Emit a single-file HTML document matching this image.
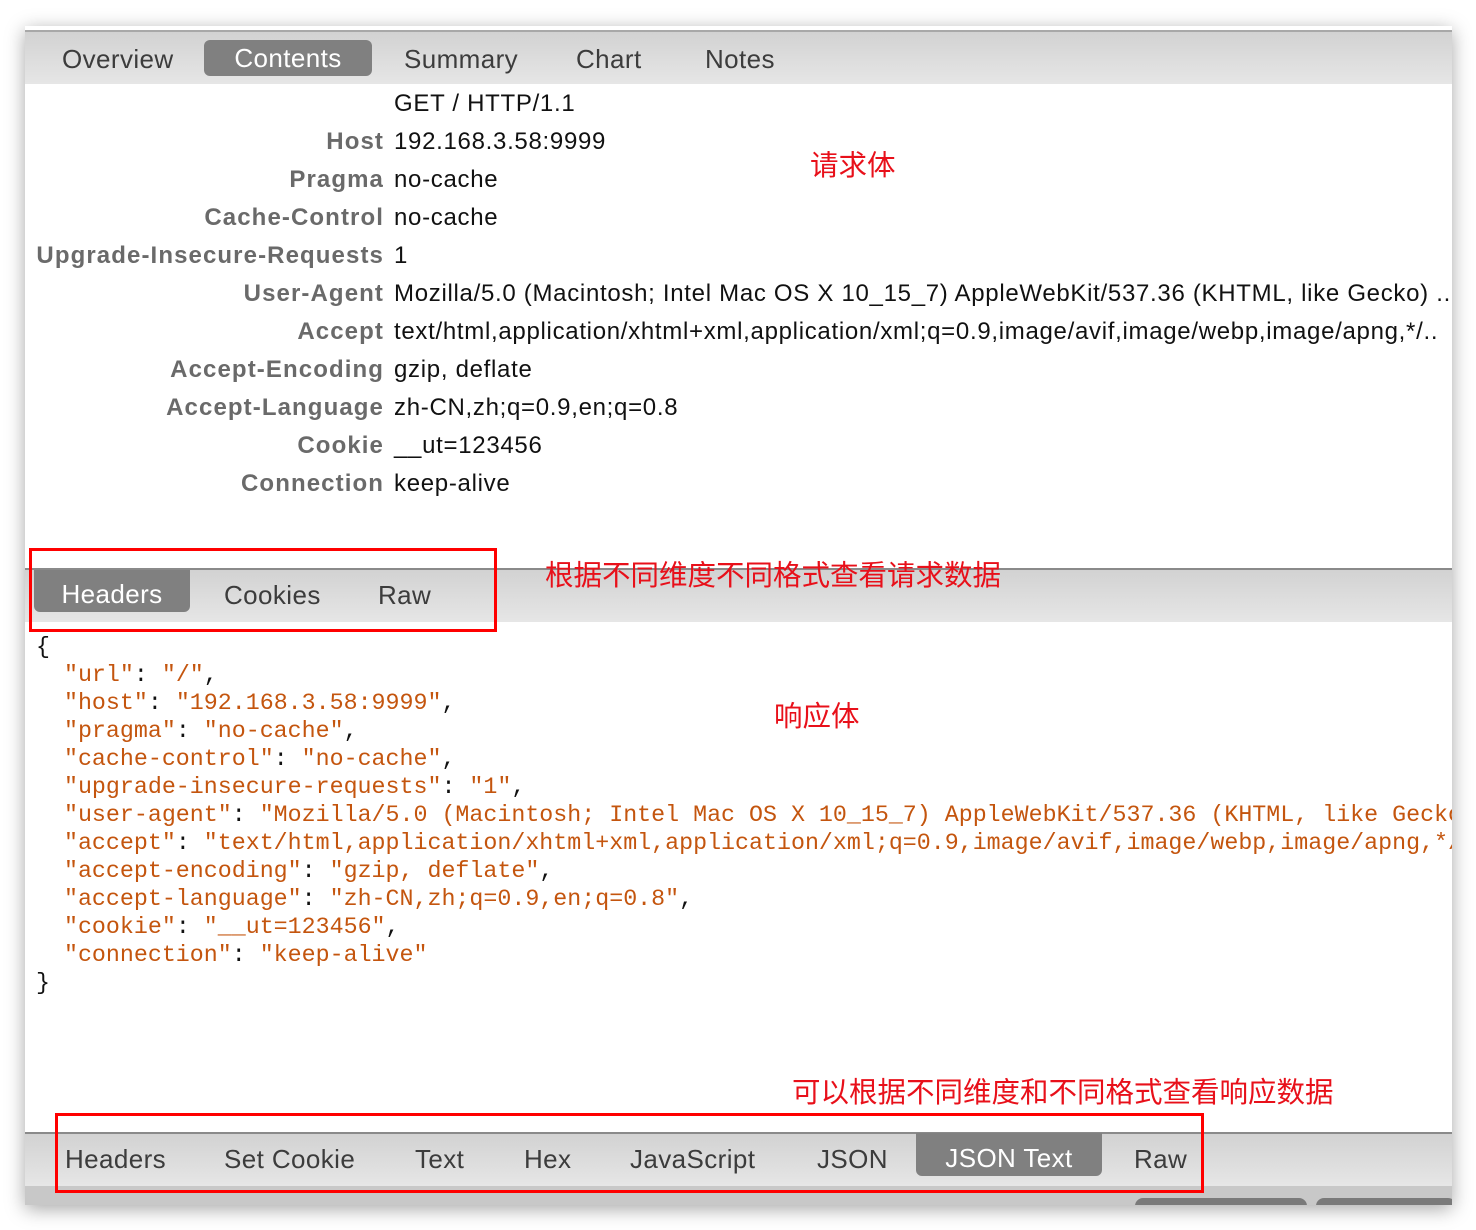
<!DOCTYPE html>
<html><head><meta charset="utf-8"><style>
*{margin:0;padding:0;box-sizing:border-box}
body{width:1476px;height:1230px;background:#fff;position:relative;overflow:hidden;font-family:"Liberation Sans",sans-serif}
#win{position:absolute;left:25px;top:26px;width:1427px;height:1179px;background:#fff;overflow:hidden;box-shadow:0 4px 18px rgba(0,0,0,.35)}
.bar{position:absolute;left:0;width:1427px;background:linear-gradient(#d2d2d2,#e6e6e6);}
.t{position:absolute;font-size:26px;letter-spacing:0.4px;color:#3c3c3c;white-space:nowrap;line-height:36px}
.sel{background:#808080;color:#fff;border-radius:6px;text-align:center}
.row{position:absolute;left:0;width:1427px;height:38px;font-size:23px;line-height:38px;white-space:nowrap}
.k{position:absolute;right:1068px;color:#6a6a6a;font-weight:bold;font-size:24px;letter-spacing:1.1px}
.v{position:absolute;left:369px;color:#111;font-size:24px;letter-spacing:0.7px}
.red{position:absolute;color:#e8101a;font-family:"Liberation Sans","Noto Sans CJK SC",sans-serif;font-size:28.5px;white-space:nowrap}
pre{position:absolute;left:11px;top:607px;font-family:"Liberation Mono",monospace;font-size:23.3px;line-height:28px;color:#111;white-space:pre}
pre .s{color:#c4550e}
.box{position:absolute;border:3px solid #f00}
</style></head><body>
<div id="win">
<div class="bar" style="top:4px;height:54px;border-top:2px solid #a8a8a8"></div>
<div class="t" style="left:37px;top:15px">Overview</div>
<div class="t sel" style="left:179px;top:14px;width:168px">Contents</div>
<div class="t" style="left:379px;top:15px">Summary</div>
<div class="t" style="left:551px;top:15px">Chart</div>
<div class="t" style="left:680px;top:15px">Notes</div>

<div class="row" style="top:59px"><span class="v">GET / HTTP/1.1</span></div>
<div class="row" style="top:97px"><span class="k">Host</span><span class="v">192.168.3.58:9999</span></div>
<div class="row" style="top:135px"><span class="k">Pragma</span><span class="v">no-cache</span></div>
<div class="row" style="top:173px"><span class="k">Cache-Control</span><span class="v">no-cache</span></div>
<div class="row" style="top:211px"><span class="k">Upgrade-Insecure-Requests</span><span class="v">1</span></div>
<div class="row" style="top:249px"><span class="k">User-Agent</span><span class="v">Mozilla/5.0 (Macintosh; Intel Mac OS X 10_15_7) AppleWebKit/537.36 (KHTML, like Gecko) ..</span></div>
<div class="row" style="top:287px"><span class="k">Accept</span><span class="v">text/html,application/xhtml+xml,application/xml;q=0.9,image/avif,image/webp,image/apng,*/..</span></div>
<div class="row" style="top:325px"><span class="k">Accept-Encoding</span><span class="v">gzip, deflate</span></div>
<div class="row" style="top:363px"><span class="k">Accept-Language</span><span class="v">zh-CN,zh;q=0.9,en;q=0.8</span></div>
<div class="row" style="top:401px"><span class="k">Cookie</span><span class="v">__ut=123456</span></div>
<div class="row" style="top:439px"><span class="k">Connection</span><span class="v">keep-alive</span></div>

<div class="bar" style="top:542px;height:54px;border-top:2px solid #8a8a8a"></div>
<div class="t sel" style="left:9px;top:544px;width:156px;height:42px;line-height:48px;border-radius:0 0 6px 6px">Headers</div>
<div class="t" style="left:199px;top:551px">Cookies</div>
<div class="t" style="left:353px;top:551px">Raw</div>

<pre>{
  <span class="s">"url"</span>: <span class="s">"/"</span>,
  <span class="s">"host"</span>: <span class="s">"192.168.3.58:9999"</span>,
  <span class="s">"pragma"</span>: <span class="s">"no-cache"</span>,
  <span class="s">"cache-control"</span>: <span class="s">"no-cache"</span>,
  <span class="s">"upgrade-insecure-requests"</span>: <span class="s">"1"</span>,
  <span class="s">"user-agent"</span>: <span class="s">"Mozilla/5.0 (Macintosh; Intel Mac OS X 10_15_7) AppleWebKit/537.36 (KHTML, like Gecko)"</span>,
  <span class="s">"accept"</span>: <span class="s">"text/html,application/xhtml+xml,application/xml;q=0.9,image/avif,image/webp,image/apng,*/*"</span>,
  <span class="s">"accept-encoding"</span>: <span class="s">"gzip, deflate"</span>,
  <span class="s">"accept-language"</span>: <span class="s">"zh-CN,zh;q=0.9,en;q=0.8"</span>,
  <span class="s">"cookie"</span>: <span class="s">"__ut=123456"</span>,
  <span class="s">"connection"</span>: <span class="s">"keep-alive"</span>
}</pre>

<div class="bar" style="top:1106px;height:54px;border-top:2px solid #8a8a8a"></div>
<div class="t" style="left:40px;top:1115px">Headers</div>
<div class="t" style="left:199px;top:1115px">Set Cookie</div>
<div class="t" style="left:390px;top:1115px">Text</div>
<div class="t" style="left:499px;top:1115px">Hex</div>
<div class="t" style="left:605px;top:1115px">JavaScript</div>
<div class="t" style="left:792px;top:1115px">JSON</div>
<div class="t sel" style="left:891px;top:1107px;width:186px;height:43px;line-height:50px;border-radius:0 0 6px 6px">JSON Text</div>
<div class="t" style="left:1109px;top:1115px">Raw</div>
<div style="position:absolute;left:0;top:1160px;width:1427px;height:19px;background:#c8c8c8"></div>
<div style="position:absolute;left:1110px;top:1172px;width:172px;height:20px;background:#7a7a7a;border-radius:8px"></div>
<div style="position:absolute;left:1291px;top:1172px;width:140px;height:20px;background:#7a7a7a;border-radius:8px"></div>
</div>

<div class="red" style="left:810px;top:143px">请求体</div>
<div class="red" style="left:545px;top:553px">根据不同维度不同格式查看请求数据</div>
<div class="red" style="left:774px;top:694px">响应体</div>
<div class="red" style="left:792px;top:1070px">可以根据不同维度和不同格式查看响应数据</div>
<div class="box" style="left:29px;top:548px;width:468px;height:84px"></div>
<div class="box" style="left:55px;top:1113px;width:1149px;height:80px"></div>
</body></html>
